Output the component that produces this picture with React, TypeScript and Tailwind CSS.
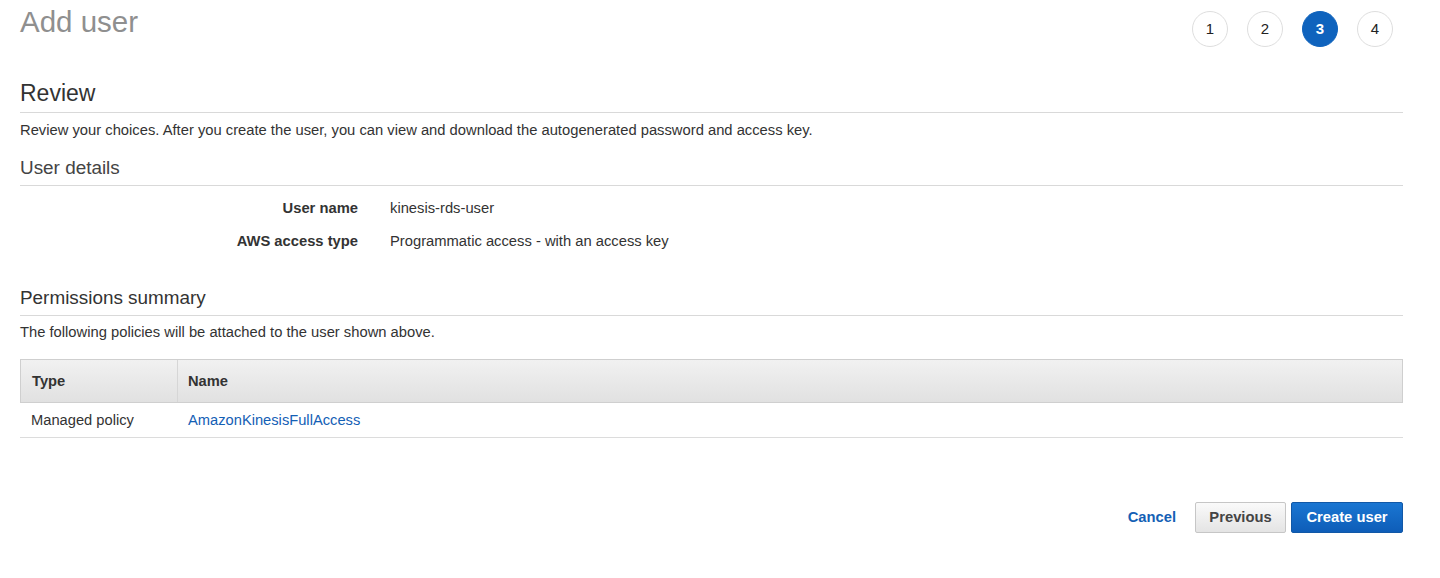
export default function App() {
  const steps = [1, 2, 3, 4];

  return (
    <div
      className="min-h-screen bg-white text-[#333] pl-[20px] pr-[37px]"
      style={{ fontFamily: '"Liberation Sans", Arial, sans-serif' }}
    >
      <div className="flex justify-between items-start h-[44px]">
        <h1 className="text-[29.5px] leading-[44px] text-[#8f8f8f]">Add user</h1>
        <div className="flex gap-[19px] mt-[11px] mr-[10px]">
          {steps.map((s) => (
            <div
              key={s}
              className={
                s === 3
                  ? "w-[36px] h-[36px] rounded-full bg-[#0f63bd] border border-[#0f63bd] text-white font-bold text-[15px] flex items-center justify-center"
                  : "w-[36px] h-[36px] rounded-full border border-[#dedede] bg-white text-[#222] text-[15px] flex items-center justify-center"
              }
            >
              {s}
            </div>
          ))}
        </div>
      </div>

      <h2 className="mt-[35px] text-[23px] leading-[28px] pb-[5px] border-b border-[#d9d9d9] text-[#333]">
        Review
      </h2>
      <p className="mt-[7px] text-[14.75px] leading-[20px]">
        Review your choices. After you create the user, you can view and download the autogenerated
        password and access key.
      </p>

      <h3 className="mt-[16px] text-[18.9px] leading-[24px] pb-[5px] border-b border-[#d9d9d9] text-[#444]">
        User details
      </h3>
      <div className="mt-[12px] grid grid-cols-[338px_1fr] gap-x-[32px] gap-y-[13px] text-[14.75px] leading-[20px]">
        <div className="text-right font-bold">User name</div>
        <div>kinesis-rds-user</div>
        <div className="text-right font-bold">AWS access type</div>
        <div>Programmatic access - with an access key</div>
      </div>

      <h3 className="mt-[35px] text-[18.9px] leading-[24px] pb-[5px] border-b border-[#d9d9d9] text-[#333]">
        Permissions summary
      </h3>
      <p className="mt-[6px] text-[14.75px] leading-[20px]">
        The following policies will be attached to the user shown above.
      </p>

      <div className="mt-[17px] text-[14.7px]">
        <div className="flex h-[44px] border border-[#cfcfcf] bg-gradient-to-b from-[#f1f1f1] to-[#e1e1e1] font-bold text-[#333]">
          <div className="w-[157px] px-[11px] flex items-center border-r border-[#d6d6d6]">Type</div>
          <div className="flex-1 px-[10px] flex items-center">Name</div>
        </div>
        <div className="flex h-[35px] border-b border-[#dcdcdc]">
          <div className="w-[158px] px-[11px] flex items-center">Managed policy</div>
          <div className="flex-1 px-[10px] flex items-center">
            <a href="#" className="text-[#1460b5]">
              AmazonKinesisFullAccess
            </a>
          </div>
        </div>
      </div>

      <div className="mt-[64px] flex justify-end items-center text-[14.75px] font-bold">
        <a href="#" className="text-[#1460b5] mr-[19px]">
          Cancel
        </a>
        <button className="h-[31px] w-[91px] rounded-[2px] border border-[#c6c6c6] bg-gradient-to-b from-[#fafafa] to-[#e4e4e4] text-[#444] mr-[5px]">
          Previous
        </button>
        <button className="h-[31px] w-[112px] rounded-[2px] border border-[#1158a7] bg-gradient-to-b from-[#1a76d2] to-[#0e5db8] text-white">
          Create user
        </button>
      </div>
    </div>
  );
}
